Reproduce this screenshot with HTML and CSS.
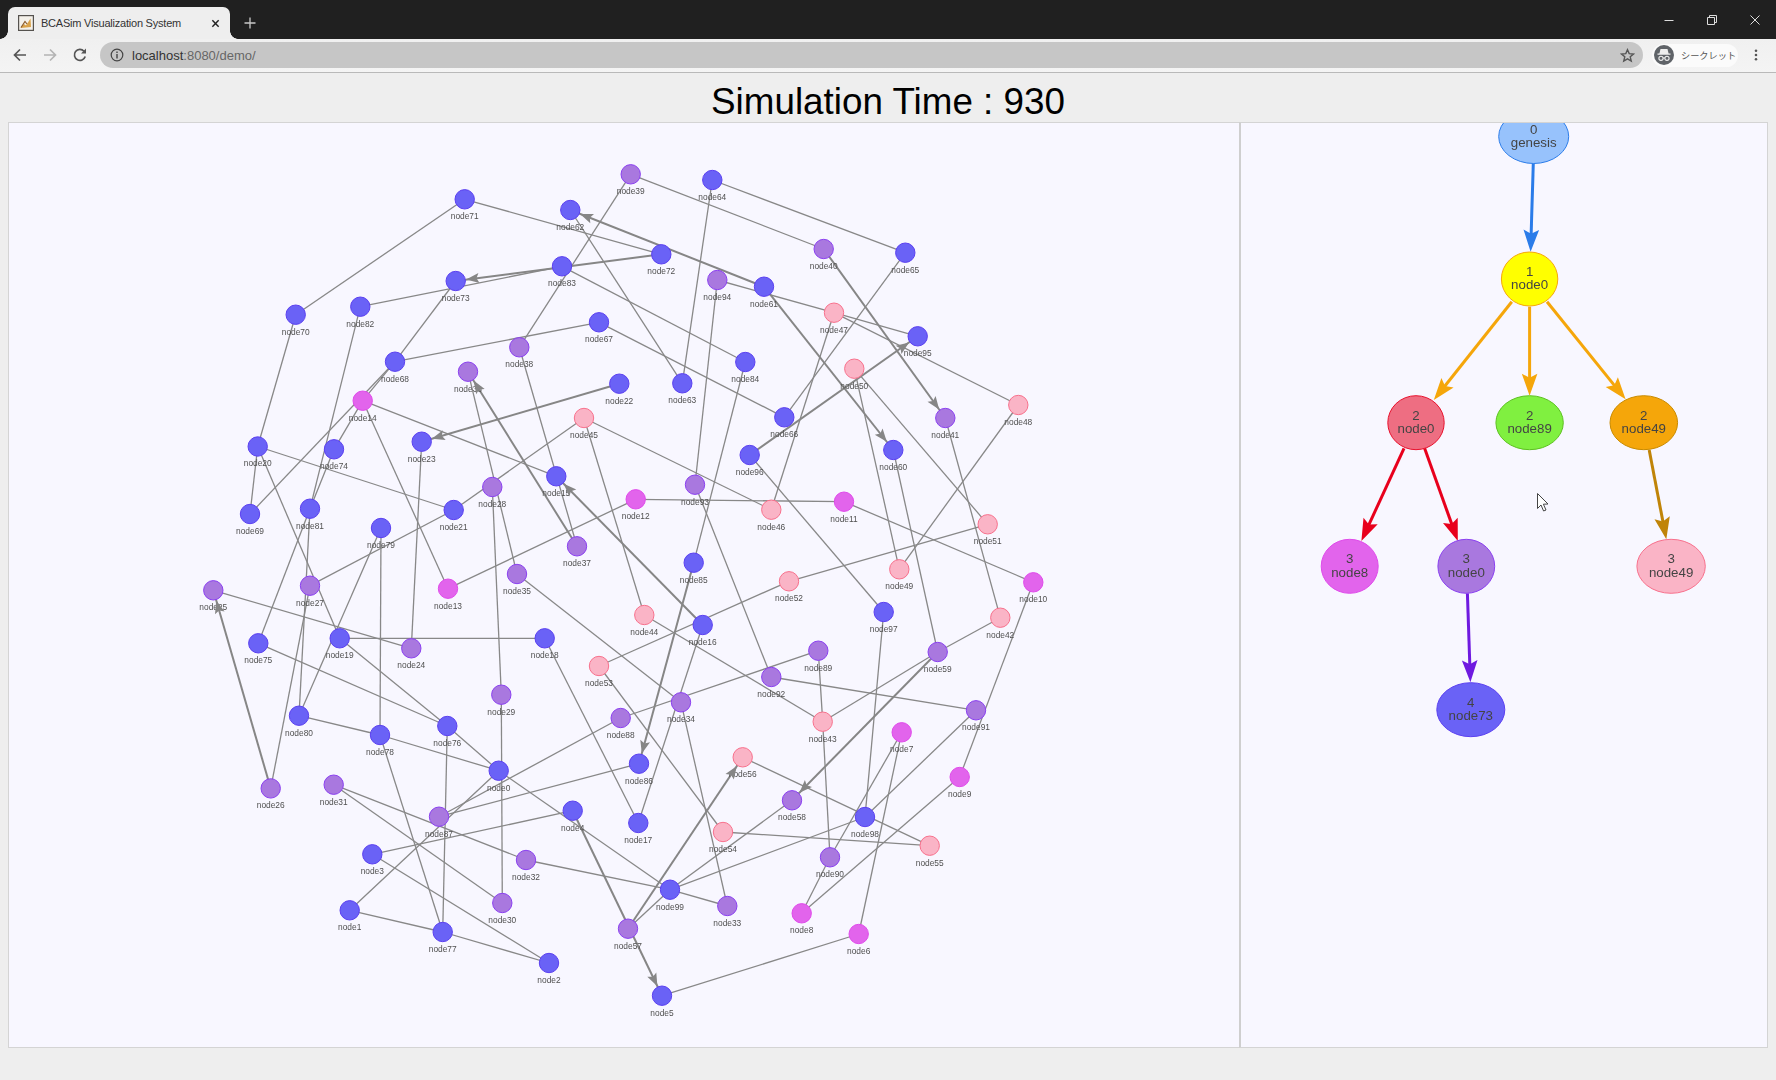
FILE: index.html
```html
<!DOCTYPE html>
<html lang="ja">
<head>
<meta charset="utf-8">
<title>BCASim Visualization System</title>
<link rel="stylesheet" href="styles.css">
</head>
<body>
<header class="browser">
  <div class="tabstrip">
    <div class="tab">
      <svg class="favicon" viewBox="0 0 16 16"><rect x="0.6" y="0.6" width="14.8" height="14.8" fill="#f4f1ea" stroke="#55524e" stroke-width="1.2"/><path d="M2.5 13 L6 9 L8 10.5 L12.5 3.5 L13 12 Z" fill="#d9a24a"/><path d="M3 12.5 L7 6.5 L9 9" fill="none" stroke="#8a5a2a" stroke-width="1.2"/></svg>
      <span class="tab-title">BCASim Visualization System</span>
      <svg class="tab-close" viewBox="0 0 10 10"><path d="M1.5 1.5 L8.5 8.5 M8.5 1.5 L1.5 8.5" stroke="#222" stroke-width="1.6"/></svg>
    </div>
    <svg class="new-tab" viewBox="0 0 12 12"><path d="M6 0.5 V11.5 M0.5 6 H11.5" stroke="#c8c8c8" stroke-width="1.3"/></svg>
    <div class="window-controls">
      <svg viewBox="0 0 10 10"><path d="M0.5 5.5 H9.5" stroke="#ddd" stroke-width="1"/></svg>
      <svg viewBox="0 0 10 10"><path d="M0.5 2.5 H7.5 V9.5 H0.5 Z M2.5 2.5 V0.5 H9.5 V7.5 H7.5" fill="none" stroke="#ddd" stroke-width="1"/></svg>
      <svg viewBox="0 0 10 10"><path d="M0.5 0.5 L9.5 9.5 M9.5 0.5 L0.5 9.5" stroke="#ddd" stroke-width="1"/></svg>
    </div>
  </div>
  <div class="toolbar">
    <svg class="nav-icon" viewBox="0 0 16 16"><path d="M14 8 H2.5 M8 2.5 L2.5 8 L8 13.5" fill="none" stroke="#555" stroke-width="1.7"/></svg>
    <svg class="nav-icon" viewBox="0 0 16 16"><path d="M2 8 H13.5 M8 2.5 L13.5 8 L8 13.5" fill="none" stroke="#b4b4b4" stroke-width="1.7"/></svg>
    <svg class="nav-icon" viewBox="0 0 16 16"><path d="M13.2 9.5 A5.5 5.5 0 1 1 12 4.2" fill="none" stroke="#555" stroke-width="1.7"/><path d="M14 1.5 V6.5 H9 Z" fill="#555"/></svg>
    <div class="omnibox">
      <svg class="info-icon" viewBox="0 0 14 14"><circle cx="7" cy="7" r="5.8" fill="none" stroke="#444" stroke-width="1.2"/><path d="M7 6 V10.5 M7 3.4 V5" stroke="#444" stroke-width="1.4"/></svg>
      <span class="url"><span class="url-host">localhost</span>:8080/demo/</span>
      <svg class="star-icon" viewBox="0 0 16 16"><path d="M8 1.8 L9.8 6 L14.4 6.4 L10.9 9.4 L12 13.9 L8 11.5 L4 13.9 L5.1 9.4 L1.6 6.4 L6.2 6 Z" fill="none" stroke="#555" stroke-width="1.5"/></svg>
    </div>
    <div class="profile">
      <svg class="avatar" viewBox="0 0 20 20"><circle cx="10" cy="10" r="10" fill="#5f6368"/><path d="M6.5 4 H13.5 L14.6 8.6 H16.5 V9.8 H3.5 V8.6 H5.4 Z" fill="#eee"/><circle cx="7" cy="13.3" r="2.1" fill="none" stroke="#eee" stroke-width="1.1"/><circle cx="13" cy="13.3" r="2.1" fill="none" stroke="#eee" stroke-width="1.1"/><path d="M9 13 H11" stroke="#eee" stroke-width="1"/></svg>
      <span class="profile-name">シークレット</span>
    </div>
    <svg class="menu-icon" viewBox="0 0 4 14"><circle cx="2" cy="2" r="1.5" fill="#555"/><circle cx="2" cy="7" r="1.5" fill="#555"/><circle cx="2" cy="12" r="1.5" fill="#555"/></svg>
  </div>
</header>
<main class="page">
  <h1 class="sim-time">Simulation Time : 930</h1>
  <div class="panels">
    <section class="panel panel-network"><svg id="network" class="graph" viewBox="9 123 1230 924" preserveAspectRatio="xMinYMin meet"></svg></section>
    <section class="panel panel-tree"><svg id="tree" class="graph" viewBox="1241 123 526 924" preserveAspectRatio="xMinYMin meet"></svg></section>
  </div>
</main>
<script src="script.js"></script>
</body>
</html>
```
FILE: styles.css
```css
* { box-sizing: border-box; }
html, body { margin: 0; height: 100%; }
body {
  width: 1776px;
  height: 1080px;
  overflow: hidden;
  background: #eeeeee;
  font-family: "Liberation Sans", Arial, sans-serif;
  display: flex;
  flex-direction: column;
}
.browser { flex: none; }
.tabstrip {
  height: 39px;
  background: #202020;
  display: flex;
  align-items: flex-end;
  padding-left: 8px;
  position: relative;
}
.tab {
  width: 222px;
  height: 32px;
  background: #eeeeee;
  border-radius: 7px 7px 0 0;
  display: flex;
  align-items: center;
  padding: 0 8px 0 10px;
  position: relative;
}
.tab::before, .tab::after {
  content: "";
  position: absolute;
  bottom: 0;
  width: 8px;
  height: 8px;
}
.tab::before { left: -8px; background: radial-gradient(circle at 0 0, transparent 7.5px, #eeeeee 8px); }
.tab::after { right: -8px; background: radial-gradient(circle at 100% 0, transparent 7.5px, #eeeeee 8px); }
.favicon { width: 16px; height: 16px; flex: none; margin-bottom: 0; }
.tab-title {
  margin-left: 7px;
  font-size: 11px;
  letter-spacing: -0.22px;
  color: #333;
  white-space: nowrap;
  flex: 1;
}
.tab-close { width: 9px; height: 9px; flex: none; margin-right: 2px; }
.new-tab { width: 12px; height: 12px; margin: 0 0 10px 14px; flex: none; }
.window-controls {
  margin-left: auto;
  margin-right: 16px;
  align-self: center;
  display: flex;
  gap: 33px;
}
.window-controls svg { width: 10px; height: 10px; display: block; }
.toolbar {
  height: 34px;
  background: linear-gradient(#f0f0f0, #f4f4f4);
  border-bottom: 1px solid #b9b9b9;
  display: flex;
  align-items: center;
  padding: 0 0 1px 12px;
}
.nav-icon { width: 16px; height: 16px; flex: none; margin-right: 14px; }
.omnibox {
  width: 1543px;
  height: 26px;
  margin-left: -2px;
  background: #c6c6c6;
  border-radius: 13px;
  display: flex;
  align-items: center;
  padding: 0 8px 0 10px;
  flex: none;
}
.info-icon { width: 14px; height: 14px; flex: none; }
.url { margin-left: 8px; font-size: 13px; color: #666; letter-spacing: 0; }
.url-host { color: #333; }
.star-icon { width: 15px; height: 15px; margin-left: auto; flex: none; }
.profile {
  width: 86px;
  height: 23px;
  margin-left: 9px;
  background: #fbfbfb;
  border-radius: 12px;
  display: flex;
  align-items: center;
  padding-left: 2px;
  flex: none;
}
.avatar { width: 20px; height: 20px; flex: none; }
.profile-name {
  margin-left: 7px;
  font-family: "Noto Sans CJK JP", sans-serif;
  font-size: 9.2px;
  color: #555;
  white-space: nowrap;
}
.menu-icon { width: 4px; height: 12px; margin-left: 16px; flex: none; }
.page { flex: 1; display: flex; flex-direction: column; min-height: 0; }
.sim-time {
  margin: 0;
  height: 49px;
  line-height: 58px;
  text-align: center;
  font-size: 36.8px;
  font-weight: 400;
  color: #000;
}
.panels {
  display: flex;
  height: 926px;
  margin: 0 8px;
}
.panel {
  background: #f8f7ff;
  border: 1px solid #d4d4d4;
  overflow: hidden;
}
.panel-network { width: 1232px; flex: none; }
.panel-tree { flex: 1; border-left: 2px solid #cfcfcf; margin-left: -1px; }
.graph { display: block; width: 100%; height: 100%; filter: blur(0.4px); }
.edge { stroke: #888; stroke-width: 1.3; fill: none; }
.edge-thick { stroke: #868686; stroke-width: 2; fill: none; }
.head { fill: #868686; }
.node { stroke-width: 1; }
.blue { fill: #6a62f6; stroke: #5a3ff0; }
.magenta { fill: #e264ec; stroke: #df4aea; }
.purple { fill: #a978df; stroke: #8a3ff0; }
.pink { fill: #fab4c6; stroke: #f7708c; }
.sky { fill: #97c2fc; stroke: #2b7ce9; }
.yellow { fill: #ffff00; stroke: #f5a60a; }
.red { fill: #ee6e82; stroke: #e8102c; }
.green { fill: #80f040; stroke: #5cc020; }
.orange { fill: #f5a60a; stroke: #c88a00; }
.node-label { font-family: "Liberation Sans", Arial, sans-serif; font-size: 8.4px; fill: #505050; text-anchor: middle; }
.tree-label { font-family: "Liberation Sans", Arial, sans-serif; font-size: 13.3px; fill: #444; text-anchor: middle; }
.cursor { fill: #fff; stroke: #444; stroke-width: 1; }
```
FILE: script.js
```js
var NS = "http://www.w3.org/2000/svg";
function add(parent, tag, attrs, text) {
  var el = document.createElementNS(NS, tag);
  for (var k in attrs) el.setAttribute(k, attrs[k]);
  if (text !== undefined) el.textContent = text;
  parent.appendChild(el);
  return el;
}
function head(parent, cls, fill, tx, ty, fx, fy, L, W, n) {
  var dx = tx - fx, dy = ty - fy, m = Math.hypot(dx, dy);
  dx /= m; dy /= m;
  var bx = tx - dx * L, by = ty - dy * L;
  var pts = [[tx, ty], [bx - dy * W, by + dx * W], [tx - dx * (L - n), ty - dy * (L - n)], [bx + dy * W, by - dx * W]];
  var attrs = { points: pts.map(function (p) { return p[0].toFixed(1) + "," + p[1].toFixed(1); }).join(" ") };
  if (cls) attrs["class"] = cls;
  if (fill) attrs.fill = fill;
  add(parent, "polygon", attrs);
}
var P = {
  0:[498.7,770.7],1:[349.7,910.3],2:[549,963],3:[372.3,854.3],4:[572.7,810.7],5:[662,995.7],6:[858.7,934],7:[901.7,732.3],8:[801.7,913.3],9:[959.7,777],
  10:[1033.3,582.3],11:[844,501.7],12:[635.7,499.3],13:[448,588.7],14:[362.7,400.7],15:[556.3,476.3],16:[702.7,625],17:[638.3,823],18:[544.7,638.3],19:[339.7,638.3],
  20:[257.7,446.5],21:[453.7,510],22:[619.3,383.7],23:[421.7,441.7],24:[411.3,648.3],25:[213.3,590.3],26:[270.7,788.4],27:[310,585.7],28:[492.3,487],29:[501.3,694.7],
  30:[502.3,903],31:[333.7,784.7],32:[526,860],33:[727.3,906],34:[681,702.3],35:[517,574],36:[468,371.7],37:[577,546.3],38:[519.3,347.3],39:[630.7,174.3],
  40:[823.7,249],41:[945.3,418],42:[1000.3,617.7],43:[822.7,721.7],44:[644.3,615],45:[584,418],46:[771.3,509.7],47:[834,312.7],48:[1018.3,405],49:[899.3,569.3],
  50:[854.3,368.7],51:[987.7,524.3],52:[789,581.3],53:[599,666],54:[723,832],55:[929.7,845.7],56:[742.7,757.3],57:[628,928.7],58:[792,800.3],59:[937.7,652],
  60:[893.3,450],61:[764,286.7],62:[570.3,210],63:[682.3,383.3],64:[712.3,180],65:[905.3,252.7],66:[784.3,417.3],67:[599,322.3],68:[395,361.7],69:[250,514],
  70:[295.7,314.7],71:[464.7,199.3],72:[661.3,254.3],73:[455.7,281],74:[334,449.3],75:[258.3,643.3],76:[447.3,726],77:[442.7,932],78:[380,735],79:[381,528],
  80:[299,715.7],81:[310,508.7],82:[360.3,306.7],83:[562,266.3],84:[745.3,362],85:[693.7,562.7],86:[639,763.7],87:[439,816.7],88:[620.7,718],89:[818.3,650.7],
  90:[830,857.3],91:[976,710.3],92:[771.3,677],93:[695,484.7],94:[717.3,280],95:[917.7,336.3],96:[749.7,455],97:[883.7,612],98:[865,817],99:[670,889.7]
};
var THIN = [[71,70],[71,72],[62,63],[82,83],[73,68],[68,67],[39,38],[83,84],[67,66],[39,40],[64,65],[64,63],[65,66],[94,47],[47,95],[47,48],[47,46],[94,93],[84,85],
  [96,97],[50,49],[50,51],[60,59],[41,42],[48,49],[51,52],[11,10],[12,11],[45,46],[93,92],[53,52],[16,17],[44,43],[45,44],[89,43],[89,88],[88,87],[43,59],[59,42],[92,91],
  [10,9],[91,98],[97,98],[7,90],[7,6],[43,90],[56,55],[54,55],[98,99],[58,99],[90,8],[9,8],[99,33],[32,99],[0,99],[3,4],[3,2],[1,77],[77,2],[1,0],[87,86],[31,32],[31,30],
  [29,30],[28,29],[78,0],[80,78],[78,77],[76,77],[76,0],[19,76],[75,76],[79,78],[79,80],[81,80],[27,26],[25,24],[24,23],[19,18],[18,17],[20,69],[20,19],[20,21],[70,20],
  [82,81],[81,75],[14,74],[74,81],[68,69],[68,14],[14,13],[14,15],[36,35],[38,37],[45,21],[21,27],[13,12],[35,34],[34,33],[53,54],[57,99],[5,6]];
var THICK = [[61,62],[72,73],[22,23],[37,36],[40,41],[61,60],[96,95],[16,15],[85,86],[26,25],[59,58],[57,56],[4,5]];
function group(i) {
  if (i >= 6 && i <= 14) return "magenta";
  if ((i >= 24 && i <= 41) || (i >= 57 && i <= 59) || (i >= 87 && i <= 94)) return "purple";
  if (i >= 42 && i <= 56) return "pink";
  return "blue";
}
var net = document.getElementById("network");
THIN.forEach(function (e) {
  var a = P[e[0]], b = P[e[1]];
  add(net, "line", { "class": "edge", x1: a[0], y1: a[1], x2: b[0], y2: b[1] });
});
THICK.forEach(function (e) {
  var a = P[e[0]], b = P[e[1]];
  add(net, "line", { "class": "edge-thick", x1: a[0], y1: a[1], x2: b[0], y2: b[1] });
});
Object.keys(P).forEach(function (i) {
  add(net, "text", { "class": "node-label", x: P[i][0], y: P[i][1] + 19.9 }, "node" + i);
});
THICK.forEach(function (e) {
  var a = P[e[0]], b = P[e[1]];
  var dx = b[0] - a[0], dy = b[1] - a[1], m = Math.hypot(dx, dy);
  head(net, "head", null, b[0] - dx / m * 10.5, b[1] - dy / m * 10.5, a[0], a[1], 13, 5, 2.5);
});
Object.keys(P).forEach(function (i) {
  add(net, "circle", { "class": "node " + group(+i), cx: P[i][0], cy: P[i][1], r: 9.7 });
});

var tree = document.getElementById("tree");
var TE = [
  [1533.3,163.3,1530.6,251.7,"#2b7ce9"],
  [1511.8,301.7,1433.8,400,"#f5a60a"],
  [1529.6,306.7,1529.6,395.7,"#f5a60a"],
  [1547,301.7,1625.6,399.3,"#f5a60a"],
  [1404,448.3,1361.4,541,"#e8001c"],
  [1424.6,448.3,1457.8,541,"#e8001c"],
  [1649.2,450,1666.3,539.3,"#c08408"],
  [1467.4,593.3,1470.4,682.3,"#6f1ae0"]
];
TE.forEach(function (e) {
  var dx = e[2] - e[0], dy = e[3] - e[1], m = Math.hypot(dx, dy);
  add(tree, "line", { x1: e[0], y1: e[1], x2: e[2] - dx / m * 15, y2: e[3] - dy / m * 15, stroke: e[4], "stroke-width": 3 });
  head(tree, null, e[4], e[2], e[3], e[0], e[1], 22, 7.8, 4);
});
var TN = [
  [1533.7,136.5,35,27,"sky","0","genesis"],
  [1529.6,279,28.2,27,"yellow","1","node0"],
  [1416,422.7,28.2,27,"red","2","node0"],
  [1529.6,422.7,33.7,27,"green","2","node89"],
  [1643.8,422.7,33.8,27,"orange","2","node49"],
  [1349.7,566.3,28.5,27,"magenta","3","node8"],
  [1466.3,566.3,28.4,27,"purple","3","node0"],
  [1671.1,566.3,34.2,27,"pink","3","node49"],
  [1470.8,709.7,34,27,"blue","4","node73"]
];
TN.forEach(function (n) {
  add(tree, "ellipse", { "class": "node " + n[4], cx: n[0], cy: n[1], rx: n[2], ry: n[3] });
  add(tree, "text", { "class": "tree-label", x: n[0], y: n[1] - 3 }, n[5]);
  add(tree, "text", { "class": "tree-label", x: n[0], y: n[1] + 10.4 }, n[6]);
});
add(tree, "path", { "class": "cursor", d: "M1537.5 493.5 V508.5 L1541 505 L1543.6 511 L1546 510 L1543.4 504.2 L1548 504 Z" });
```
